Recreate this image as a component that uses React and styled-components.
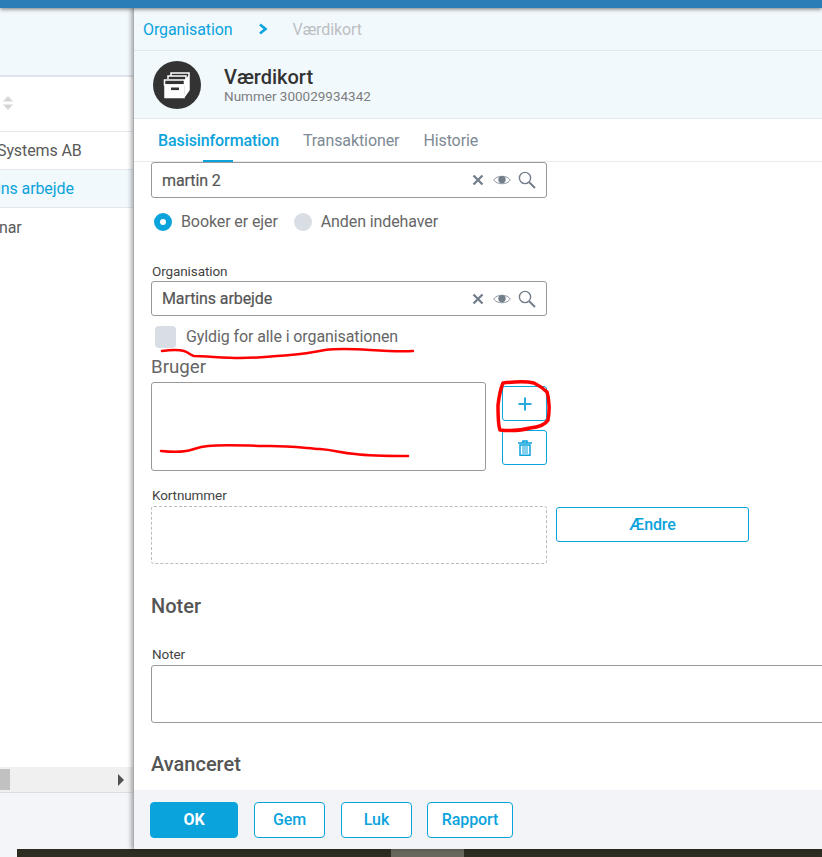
import React from 'react';
import styled, { createGlobalStyle } from 'styled-components';

const Global = createGlobalStyle`
  html, body { margin: 0; padding: 0; background: #fff; }
  * { box-sizing: border-box; }
  body { font-family: Roboto, "Liberation Sans", sans-serif; }
`;

const Page = styled.div`
  position: relative; width: 822px; height: 857px; overflow: hidden;
  display: flex; flex-direction: column; background: #fff;
`;
const TopBar = styled.div`height: 8px; flex: none; background: #2a7db6; position: relative; z-index: 3; box-shadow: 0 1px 4px rgba(0,0,0,.55);`;
const Main = styled.div`flex: 1; min-height: 0; display: flex;`;
const BottomStrip = styled.div`
  height: 8px; flex: none; display: flex; background: #2f2c22;
`;
const StripLight = styled.div`width: ${p => p.$w}px; background: ${p => p.$c};`;

const Left = styled.div`width: 133px; flex: none; display: flex; flex-direction: column; background: #fff;`;
const LeftHead = styled.div`height: 69px; flex: none; background: #f2f9fd; border-bottom: 2px solid #dfe4ea;`;
const SortRow = styled.div`height: 55px; flex: none; border-bottom: 1px solid #e4e8ee; display: flex; align-items: center; padding: 0 0 2px 3px;`;
const ListRow = styled.div`
  height: 38px; flex: none; display: flex; align-items: center; font-size: 16px; letter-spacing: -.1px;
  white-space: nowrap; overflow: hidden;
  color: ${p => p.$active ? '#0ba3dc' : '#5a5a5a'};
  background: ${p => p.$active ? '#f2f9fd' : '#fff'};
  border-bottom: ${p => p.$plain ? 'none' : '1px solid #e4e8ee'};
`;
const RowText = styled.span`margin-left: ${p => p.$shift}px;`;
const LeftSpacer = styled.div`flex: 1;`;
const HScroll = styled.div`height: 26px; flex: none; background: #f0f0f0; border-bottom: 1px solid #d9dde5; display: flex; align-items: center; justify-content: space-between; padding-right: 9px;`;
const HThumb = styled.div`width: 10px; height: 21px; background: #c1c1c1;`;
const HArrow = styled.div`width: 0; height: 0; border-top: 6px solid transparent; border-bottom: 6px solid transparent; border-left: 6px solid #505050;`;
const LeftFoot = styled.div`height: 56px; flex: none; background: #f3f5f8;`;

const Drawer = styled.div`
  flex: 1; min-width: 0; display: flex; flex-direction: column; background: #fff;
  border-left: 1px solid #a9adb1; box-shadow: -2px 0 4px rgba(0,0,0,.3); position: relative; z-index: 2;
  letter-spacing: -.1px;
`;
const Crumbs = styled.div`
  height: 43px; flex: none; background: #f2f9fd; border-bottom: 1px solid #e0e8ee;
  display: flex; align-items: center; padding: 0 0 0 9px; font-size: 16px;
`;
const CrumbLink = styled.span`color: #0ba3dc;`;
const CrumbSep = styled.span`display: flex; margin: 0 25px 0 25px;`;
const CrumbNow = styled.span`color: #bcbfc2;`;
const Head = styled.div`
  height: 68px; flex: none; background: #f2f9fd; border-bottom: 1px solid #e0e8ee;
  display: flex; align-items: center; padding-left: 19px; gap: 23px;
`;
const Avatar = styled.div`width: 48px; height: 48px; border-radius: 50%; background: #333; display: flex; align-items: center; justify-content: center;`;
const HeadText = styled.div`display: flex; flex-direction: column; padding-top: 1px;`;
const Title = styled.div`font-size: 20px; font-weight: 500; line-height: 22px; color: #333; letter-spacing: 0;`;
const Sub = styled.div`font-size: 13.5px; line-height: 16px; color: #7d7d7d; letter-spacing: 0;`;
const Tabs = styled.div`
  height: 43px; flex: none; border-bottom: 1px solid #e8eaee; display: flex; padding-left: 24px; gap: 24px; background: #fff;
`;
const Tab = styled.div`
  position: relative; font-size: 16px; line-height: 43px; font-weight: ${p => p.$active ? 500 : 400};
  color: ${p => p.$active ? '#0ba3dc' : '#7d8994'};
  ${p => p.$active && `&::after { content: ''; position: absolute; left: 45px; width: 30px; height: 2px; bottom: -1px; background: #0ba3dc; }`}
`;
const Content = styled.div`flex: 1; min-height: 0; overflow: hidden; padding: 0 0 0 17px; position: relative;`;
const Search = styled.div`
  width: 396px; height: ${p => p.$h}px; border: 1px solid #999; border-radius: 3px; display: flex; align-items: center;
  padding: 0 10px 0 10px; font-size: 16px; color: #555; margin-top: ${p => p.$mt || 0}px;
`;
const SearchText = styled.span`flex: 1; -webkit-text-stroke: .2px #555;`;
const IconRow = styled.span`display: flex; align-items: center; gap: 7.5px;`;
const Radios = styled.div`display: flex; align-items: center; margin: 12px 0 0 3px; height: 22px; font-size: 16px; color: #666;`;
const Radio = styled.span`
  width: 18px; height: 18px; border-radius: 50%; flex: none; margin: 2px 9px 0 0;
  background: ${p => p.$on ? '#fff' : '#d9dde4'};
  border: ${p => p.$on ? '6px solid #0ba3dc' : 'none'};
`;
const RadioLabel = styled.span`margin-right: 16px;`;
const SmallLabel = styled.div`font-size: 13.5px; line-height: 15px; color: #444; margin-top: ${p => p.$mt}px; padding-left: 1px;`;
const Check = styled.div`display: flex; align-items: center; margin: 9px 0 0 4px; height: 22px; font-size: 16px; color: #666; gap: 10px;`;
const CheckBox = styled.span`width: 21px; height: 22px; border-radius: 4px; background: #d9dde4; flex: none; margin-top: 1px;`;
const SectionLabel = styled.div`font-size: 18.7px; line-height: 22px; color: #666; margin-top: 9px; letter-spacing: 0;`;
const UserRow = styled.div`display: flex; gap: 16px; margin-top: 4px;`;
const UserBox = styled.div`width: 335px; height: 89px; border: 1px solid #999; border-radius: 3px;`;
const UserBtns = styled.div`display: flex; flex-direction: column; gap: 9px; padding-top: 4px;`;
const IconBtn = styled.button`
  width: 45px; height: 35px; padding: 0; background: #fff; border: 1px solid #0ba3dc; border-radius: 3px;
  display: flex; align-items: center; justify-content: center;
`;
const CardRow = styled.div`display: flex; gap: 9px; margin-top: 3px; align-items: flex-start;`;
const Dashed = styled.div`width: 396px; height: 58px; border: 1px dashed #bbb; border-radius: 3px;`;
const ChangeBtn = styled.button`
  width: 193px; height: 35px; margin-top: 1px; background: #fff; border: 1px solid #0ba3dc; border-radius: 3px;
  color: #0ba3dc; font: 500 16px Roboto, sans-serif; letter-spacing: -.1px;
`;
const H2 = styled.div`font-size: 20px; font-weight: 500; line-height: 22px; color: #555; letter-spacing: 0; margin-top: ${p => p.$mt}px;`;
const NoteBox = styled.div`width: 700px; height: 58px; border: 1px solid #999; border-radius: 3px; margin-top: 3px;`;
const Foot = styled.div`height: 59px; flex: none; background: #f2f4f7; display: flex; align-items: center; padding-left: 16px;`;
const FootBtn = styled.button`
  height: 36px; width: ${p => p.$w}px; margin-right: ${p => p.$mr}px; padding: 0; border-radius: 4px;
  border: 1px solid #0ba3dc; font: ${p => p.$primary ? 700 : 500} 16px Roboto, sans-serif; letter-spacing: -.1px;
  background: ${p => p.$primary ? '#0ba3dc' : '#fff'}; color: ${p => p.$primary ? '#fff' : '#0ba3dc'};
`;
const Scribbles = styled.svg`position: absolute; left: 0; top: 0; width: 822px; height: 857px; pointer-events: none; z-index: 5;`;

const SortIcon = () => (
  <svg width="10" height="14" viewBox="0 0 10 14"><path d="M5 0 L10 5.5 H0Z M0 8.5 H10 L5 14Z" fill="#d5d7da" /></svg>
);
const Chevron = () => (
  <svg width="10" height="12" viewBox="0 0 10 12"><path d="M2 1.5 L7.5 6 L2 10.5" fill="none" stroke="#0ba3dc" strokeWidth="2.6" /></svg>
);
const BoxIcon = () => (
  <svg width="28" height="28" viewBox="0 0 28 28" fill="none" stroke="#fff" strokeWidth="1.5">
    <path d="M8 5 V2 H26 V19 L21 26" />
    <path d="M5 8 V5 H23 V10" />
    <rect x="1.5" y="9" width="20" height="5" fill="#333" />
    <path d="M2 14 H21 V26.5 H2 Z" fill="#fff" stroke="#fff" />
    <path d="M21.5 9 L26 4 V19 L21.5 26Z" fill="#fff" stroke="none" />
    <rect x="8" y="16.5" width="8" height="2.6" fill="#333" stroke="none" />
  </svg>
);
const Clear = () => (
  <svg width="14" height="14" viewBox="0 0 14 14"><path d="M2.5 2.5 L11.5 11.5 M11.5 2.5 L2.5 11.5" stroke="#737e8b" strokeWidth="2.3" /></svg>
);
const Eye = () => (
  <svg width="18" height="12" viewBox="0 0 18 12"><path d="M.7 6 C4 1 14 1 17.3 6 C14 11 4 11 .7 6Z" fill="none" stroke="#8b959f" strokeWidth="1" /><circle cx="9" cy="5.6" r="3.7" fill="#737e8b" /></svg>
);
const Mag = () => (
  <svg width="18" height="18" viewBox="0 0 18 18" fill="none" stroke="#737e8b"><circle cx="7" cy="7" r="5.6" strokeWidth="1.4" /><path d="M11 11 L17 17" strokeWidth="1.9" /></svg>
);
const Plus = () => (
  <svg width="14" height="14" viewBox="0 0 14 14"><path d="M7 .5 V13.5 M.5 7 H13.5" stroke="#2aa8dc" strokeWidth="2" /></svg>
);
const Trash = () => (
  <svg width="14" height="16" viewBox="0 0 14 16" fill="none" stroke="#0ba3dc"><path d="M0 3 H14 M5 3 V1 H9 V3" strokeWidth="1.6" /><path d="M2 5 H12 V15.2 H2Z" strokeWidth="1.5" /><path d="M5 6 V14 M7 6 V14 M9 6 V14" strokeWidth="1" /></svg>
);
const FieldIcons = () => (
  <IconRow><Clear /><Eye /><Mag /></IconRow>
);

export default function App() {
  return (
    <Page>
      <Global />
      <TopBar />
      <Main>
        <Left>
          <LeftHead />
          <SortRow><SortIcon /></SortRow>
          <ListRow><RowText $shift={-3}>Systems AB</RowText></ListRow>
          <ListRow $active><RowText $shift={-3}>ins arbejde</RowText></ListRow>
          <ListRow $plain><RowText $shift={-1}>nar</RowText></ListRow>
          <LeftSpacer />
          <HScroll><HThumb /><HArrow /></HScroll>
          <LeftFoot />
        </Left>
        <Drawer>
          <Crumbs>
            <CrumbLink>Organisation</CrumbLink>
            <CrumbSep><Chevron /></CrumbSep>
            <CrumbNow>Værdikort</CrumbNow>
          </Crumbs>
          <Head>
            <Avatar><BoxIcon /></Avatar>
            <HeadText>
              <Title>Værdikort</Title>
              <Sub>Nummer 300029934342</Sub>
            </HeadText>
          </Head>
          <Tabs>
            <Tab $active>Basisinformation</Tab>
            <Tab>Transaktioner</Tab>
            <Tab>Historie</Tab>
          </Tabs>
          <Content>
            <Search $h={36}><SearchText>martin 2</SearchText><FieldIcons /></Search>
            <Radios>
              <Radio $on /><RadioLabel>Booker er ejer</RadioLabel>
              <Radio /><RadioLabel>Anden indehaver</RadioLabel>
            </Radios>
            <SmallLabel $mt={32}>Organisation</SmallLabel>
            <Search $h={35} $mt={2}><SearchText>Martins arbejde</SearchText><FieldIcons /></Search>
            <Check><CheckBox />Gyldig for alle i organisationen</Check>
            <SectionLabel>Bruger</SectionLabel>
            <UserRow>
              <UserBox />
              <UserBtns>
                <IconBtn><Plus /></IconBtn>
                <IconBtn><Trash /></IconBtn>
              </UserBtns>
            </UserRow>
            <SmallLabel $mt={17}>Kortnummer</SmallLabel>
            <CardRow>
              <Dashed />
              <ChangeBtn>Ændre</ChangeBtn>
            </CardRow>
            <H2 $mt={31}>Noter</H2>
            <SmallLabel $mt={30}>Noter</SmallLabel>
            <NoteBox />
            <H2 $mt={30}>Avanceret</H2>
          </Content>
          <Foot>
            <FootBtn $primary $w={88} $mr={16}>OK</FootBtn>
            <FootBtn $w={71} $mr={16}>Gem</FootBtn>
            <FootBtn $w={71} $mr={15}>Luk</FootBtn>
            <FootBtn $w={86} $mr={0}>Rapport</FootBtn>
          </Foot>
        </Drawer>
      </Main>
      <BottomStrip>
        <StripLight $w={17} $c="#f3f5f8" />
        <StripLight $w={374} $c="#2f2c22" />
        <StripLight $w={73} $c="#6a675d" />
      </BottomStrip>
      <Scribbles viewBox="0 0 822 857" fill="none" stroke="#f00" strokeWidth="2.5" strokeLinecap="round" strokeLinejoin="round">
        <path d="M162 351 C170 350 180 350 184 351 C188 352 190 355 194 356 C205 356 225 358 240 358 C260 358 275 356 290 355 C305 354 315 352 325 350 C340 348 355 349 370 350 C385 351 400 352 413 351" />
        <path d="M161 451 C170 452 180 452 186 451 C192 450 198 447 208 446 C225 444 250 446 270 446 C290 446 305 448 320 449 C335 450 340 453 355 454 C370 456 390 456 408 456" />
        <path strokeWidth="3.5" d="M503 383 C512 382 525 381 534 383 C540 386 544 389 547 392 C549 398 550 410 548 420 C545 425 540 427 530 428 C520 431 510 431 500 430 C498 425 498 415 498 405 C499 397 500 390 503 383Z" />
      </Scribbles>
    </Page>
  );
}
